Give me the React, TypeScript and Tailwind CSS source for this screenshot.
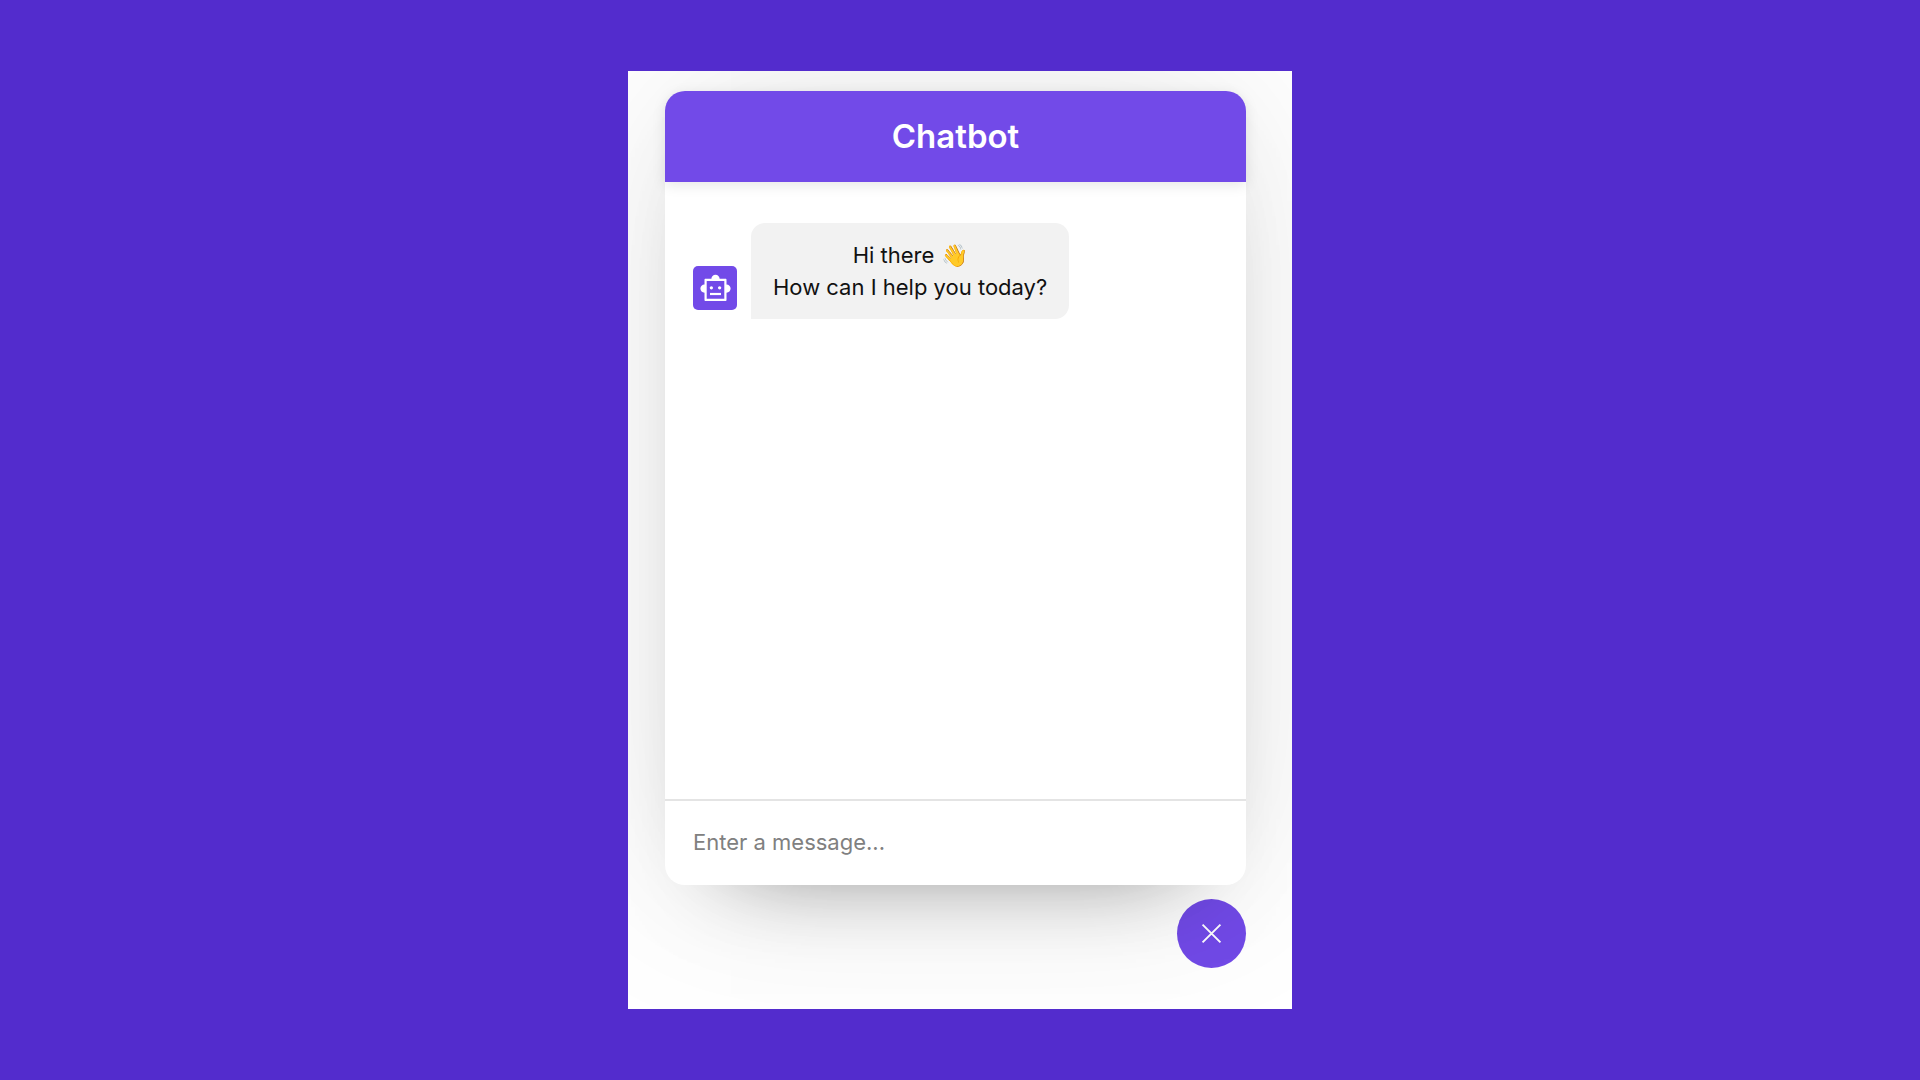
import { useState } from "react";

function RobotIcon() {
  return (
    <svg viewBox="0 0 24 24" className="size-[33px] fill-white" aria-hidden="true">
      <path
        fillRule="evenodd"
        d="M20 9V5.6c0-.4-.3-.7-.7-.7H15c0-1.6-1.34-2.9-3-2.9S9 3.3 9 4.900H4.700c-.4 0-.7.3-.7.7V9c-1.66 0-3 1.34-3 3s1.34 3 3 3v5.300c0 .4.3.7.7.7h14.600c.4 0 .7-.3.7-.7V15c1.66 0 3-1.34 3-3s-1.34-3-3-3zM18.400 19.400H5.600V6.500h12.800z"
      />
      <circle cx="9" cy="11.5" r="1.2" />
      <circle cx="15" cy="11.5" r="1.2" />
      <path d="M8 15.2h8v1.6H8z" />
    </svg>
  );
}

function CloseIcon() {
  return (
    <svg viewBox="0 0 24 24" className="size-[33px]" aria-hidden="true">
      <path d="M5.5 5.5l13 13M18.5 5.5l-13 13" fill="none" stroke="white" strokeWidth="1.4" />
    </svg>
  );
}

export default function App() {
  const [message, setMessage] = useState("");

  return (
    <div className="flex min-h-screen items-center justify-center bg-[#532ccd] font-['Inter',sans-serif]">
      <main className="flex w-full max-w-[664px] flex-col overflow-hidden bg-white pt-5 pr-[46px] pb-[41px] pl-[37px]">
        <section className="relative z-10 flex flex-col rounded-[20px] bg-white shadow-[0_0_177px_0_rgba(0,0,0,0.1),0_44px_88px_-66px_rgba(0,0,0,0.5)]">
          <header className="rounded-t-[20px] bg-[#724ae8] py-[22px] text-center shadow-[0_3px_14px_rgba(0,0,0,0.1)]">
            <h1 className="text-[33px] leading-[47px] font-semibold text-white">Chatbot</h1>
          </header>
          <ul className="min-h-[617px] px-7 pt-[41px]">
            <li className="flex items-end">
              <span className="mr-[14px] mb-[9px] flex size-11 shrink-0 items-center justify-center rounded-[5px] bg-[#724ae8]">
                <RobotIcon />
              </span>
              <p className="rounded-[14px] rounded-bl-none bg-[#f2f2f2] px-[22px] py-4 text-center text-[22px] leading-8 text-[#111111]">
                Hi there 👋
                <br />
                How can I help you today?
              </p>
            </li>
          </ul>
          <form className="border-t-2 border-[#e4e4e4] px-7 pb-[2px]" onSubmit={(e) => e.preventDefault()}>
            <input
              type="text"
              aria-label="Enter a message"
              placeholder="Enter a message..."
              value={message}
              onChange={(e) => setMessage(e.target.value)}
              className="h-[82px] w-full bg-transparent text-[22px] text-black outline-none placeholder:text-[#808080]"
            />
          </form>
        </section>
        <button
          type="button"
          aria-label="Close chat"
          className="mt-[14px] flex size-[69px] items-center justify-center self-end rounded-full bg-[#724ae8]"
        >
          <CloseIcon />
        </button>
      </main>
    </div>
  );
}
